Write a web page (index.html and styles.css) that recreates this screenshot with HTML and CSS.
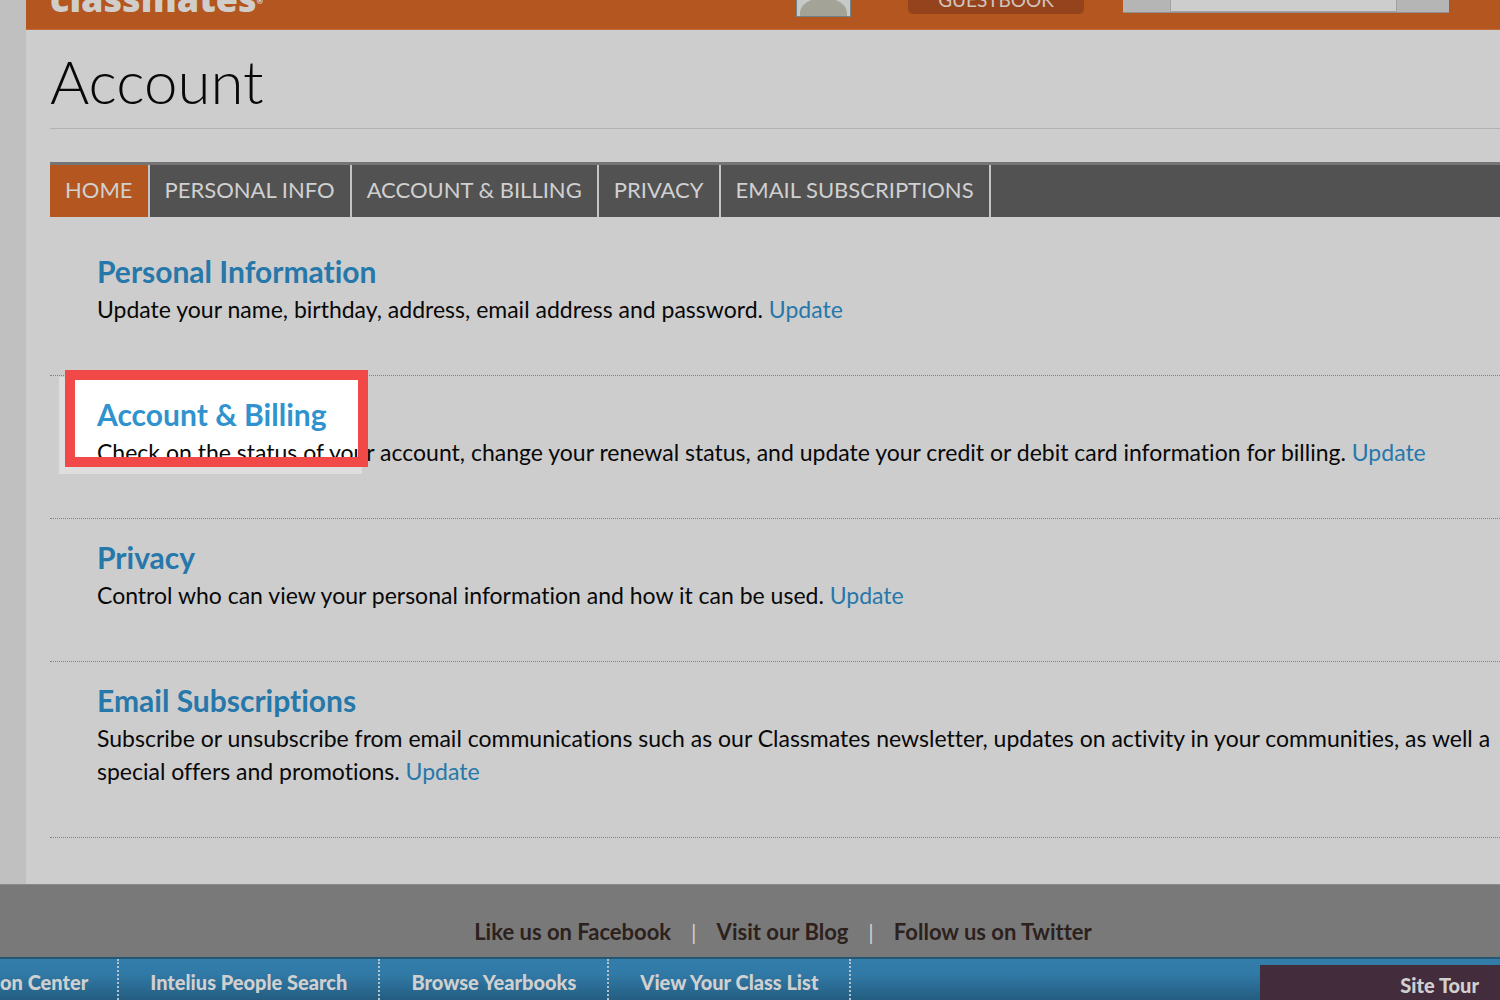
FILE: index.html
```html
<!DOCTYPE html>
<html lang="en">
<head>
<meta charset="utf-8">
<meta name="viewport" content="width=device-width, initial-scale=1">
<title>Account</title>
<link rel="stylesheet" href="styles.css">
</head>
<body>
<div class="page">
  <header class="masthead">
    <a class="logo" href="#">classmates<span class="logo-mark">®</span></a>
    <a class="avatar" href="#" aria-label="Profile">
      <svg viewBox="0 0 55 56" width="55" height="56" aria-hidden="true">
        <rect width="55" height="56" fill="#70828a"/>
        <rect x="1" width="53" height="55" fill="#c7cac7"/>
        <circle cx="27" cy="22" r="13" fill="#a3a398"/>
        <path d="M4 55V51C5 45 9 42 15 39L20 36H35L40 39C46 42 50 45 51 51V55Z" fill="#a3a398"/>
      </svg>
    </a>
    <button class="guestbook" type="button">GUESTBOOK</button>
    <form class="search">
      <button class="search-side search-scope" type="button" aria-label="Search scope"></button>
      <input class="search-box" type="text" aria-label="Search">
      <button class="search-side search-go" type="button" aria-label="Search now"></button>
    </form>
  </header>
  <main class="content">
    <h1 class="title">Account</h1>
    <nav class="tabs">
      <a class="tab tab-active" href="#">HOME</a>
      <a class="tab" href="#">PERSONAL INFO</a>
      <a class="tab" href="#">ACCOUNT &amp; BILLING</a>
      <a class="tab" href="#">PRIVACY</a>
      <a class="tab" href="#">EMAIL SUBSCRIPTIONS</a>
    </nav>
    <div class="sections">
      <section class="item">
        <h2 class="item-title">Personal Information</h2>
        <p class="item-text">Update your name, birthday, address, email address and password. <a href="#">Update</a></p>
      </section>
      <section class="item item-highlight">
        <h2 class="item-title">Account &amp; Billing</h2>
        <p class="item-text">Check on the status of your account, change your renewal status, and update your credit or debit card information for billing. <a href="#">Update</a></p>
      </section>
      <section class="item">
        <h2 class="item-title">Privacy</h2>
        <p class="item-text">Control who can view your personal information and how it can be used. <a href="#">Update</a></p>
      </section>
      <section class="item">
        <h2 class="item-title">Email Subscriptions</h2>
        <p class="item-text">Subscribe or unsubscribe from email communications such as our Classmates newsletter, updates on activity in your communities, as well a<br>special offers and promotions. <a href="#">Update</a></p>
      </section>
    </div>
  </main>
</div>
<footer class="footer">
  <nav class="social">
    <a href="#">Like us on Facebook</a>
    <a href="#">Visit our Blog</a>
    <a href="#">Follow us on Twitter</a>
  </nav>
  <nav class="bar">
    <a class="bar-link bar-first" href="#">on Center</a>
    <a class="bar-link" href="#">Intelius People Search</a>
    <a class="bar-link" href="#">Browse Yearbooks</a>
    <a class="bar-link" href="#">View Your Class List</a>
    <a class="tour" href="#">Site Tour</a>
  </nav>
</footer>
</body>
</html>
```
FILE: styles.css
```css
*,
*::before,
*::after {
  box-sizing: border-box;
}

body {
  margin: 0;
  min-height: 100vh;
  display: flex;
  flex-direction: column;
  overflow: hidden;
  background: #c0c0c0;
  color: #080808;
  font-family: Lato, "Liberation Sans", sans-serif;
  font-size: 23px;
  font-variant-ligatures: none;
}

a {
  color: #2678aa;
  text-decoration: none;
}

.page {
  flex: 1;
  margin-left: 26px;
  background: #cdcdcd;
}

.masthead {
  display: flex;
  align-items: flex-end;
  height: 30px;
  padding-left: 24px;
  overflow: hidden;
  background: #b35620;
  border-bottom: 1px solid #c16a38;
}

.logo {
  width: 746px;
  flex: none;
  color: #d0cdcb;
  font-family: "Open Sans", sans-serif;
  font-size: 36px;
  font-weight: 800;
  line-height: 56px;
}

.logo-mark {
  font-size: 8px;
  vertical-align: 8px;
}

.avatar {
  display: flex;
  margin-right: 57px;
  padding-bottom: 12px;
}

.guestbook {
  width: 176px;
  height: 46px;
  margin: 0 39px 15px 0;
  border: 0;
  border-radius: 5px;
  background: #95431c;
  color: #d0c5bf;
  font: 19px/64px Lato, sans-serif;
  padding: 0;
}

.search {
  display: flex;
  width: 326px;
  height: 40px;
  margin-bottom: 16px;
  border-bottom: 1px solid #91908e;
}

.search-side {
  border: 0;
  background: #b5b5b5;
}

.search-scope {
  width: 47px;
}

.search-go {
  width: 52px;
}

.search-box {
  flex: 1;
  min-width: 0;
  border: 1px solid #a2a2a2;
  background: #cdcdcd;
}

.content {
  padding: 0 0 46px 24px;
}

.title {
  height: 99px;
  margin: 0 0 33px;
  padding-top: 15px;
  border-bottom: 1px solid #b2b2b2;
  font-size: 60px;
  font-weight: 300;
  line-height: 72px;
}

.tabs {
  display: flex;
  height: 55px;
  border-top: 3px solid #757575;
  background: #525252;
}

.tab {
  padding: 0 15px;
  border-right: 2px solid #c4c4c4;
  color: #d0d0d0;
  font-size: 22px;
  line-height: 50px;
}

.tab-active {
  background: #b35620;
}

.sections {
  padding-top: 16px;
}

.item {
  position: relative;
  padding: 19px 0 49px 47px;
  border-bottom: 1px dotted #828282;
}

.item-title {
  margin: 0 0 3px;
  color: #2678aa;
  font-size: 30px;
  font-weight: 700;
  line-height: 38px;
}

.item-text {
  margin: 0;
  line-height: 33px;
  white-space: nowrap;
}

.item-highlight .item-title,
.item-highlight .item-text {
  position: relative;
}

.item-highlight .item-title {
  color: #3093ce;
}

/* lit area behind the text */
.item-highlight::before {
  content: "";
  position: absolute;
  left: 15px;
  top: -6px;
  width: 303px;
  height: 97px;
  background: #fff;
  box-shadow: -6px 7px 0 #dedede;
}

/* frame over the text */
.item-highlight::after {
  content: "";
  position: absolute;
  left: 15px;
  top: -6px;
  width: 303px;
  height: 97px;
  border: 10px solid #f14848;
}

.social {
  display: flex;
  justify-content: center;
  height: 73px;
  padding: 18px 0 0 66px;
  border-top: 1px solid #898989;
  background: #797979;
  font-size: 22px;
  font-weight: 700;
  line-height: 58px;
}

.social a {
  color: #2c211d;
}

.social a + a::before {
  content: "|";
  margin: 0 20px;
  color: #cdcdcd;
  font-weight: 400;
}

.bar {
  display: flex;
  height: 43px;
  border-top: 2px solid #245774;
  background: linear-gradient(#337dab, #317aa7 35%, #245d81);
  font-size: 20px;
  font-weight: 900;
  line-height: 46px;
}

.bar-link {
  padding: 0 31px;
  border-right: 2px dotted #b6c3ca;
  color: #d0d0d0;
}

.bar-first {
  padding: 0 29px 0 0;
}

.tour {
  width: 240px;
  margin: 6px 0 0 auto;
  padding-right: 21px;
  background: #432c3b;
  color: #d0d0d0;
  line-height: 40px;
  text-align: right;
}
```
